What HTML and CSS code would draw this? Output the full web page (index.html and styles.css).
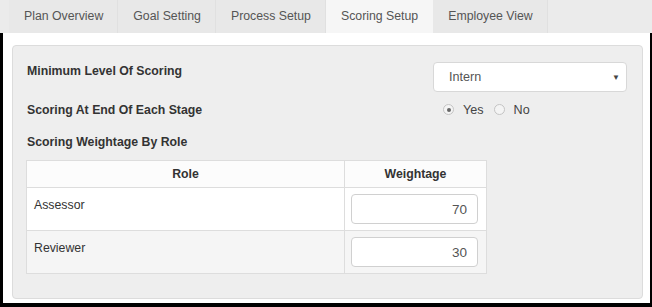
FILE: index.html
```html
<!DOCTYPE html>
<html>

<head>
    <meta charset="utf-8">
    <title>Scoring Setup</title>
    <link rel="stylesheet" href="styles.css">
</head>

<body>
    <!-- tabs -->
    <div class="tabs">
        <span class="tab">Plan Overview</span>
        <span class="tab">Goal Setting</span>
        <span class="tab">Process Setup</span>
        <span class="tab active">Scoring Setup</span>
        <span class="tab">Employee View</span>
    </div>

    <div class="content">
        <div class="panel">
            <div class="form-row">
                <label class="title">Minimum Level Of Scoring</label>
                <div class="select">
                    <span>Intern</span>
                    <span class="caret">&#9660;</span>
                </div>
            </div>

            <div class="form-row stage">
                <label class="title">Scoring At End Of Each Stage</label>
                <div class="radios">
                    <span class="radio checked"></span>
                    <span class="radio-text">Yes</span>
                    <span class="radio"></span>
                    <span class="radio-text">No</span>
                </div>
            </div>

            <label class="title weight-title">Scoring Weightage By Role</label>

            <!-- weightage table -->
            <table class="weight-table">
                <thead>
                    <tr>
                        <th class="col-role">Role</th>
                        <th class="col-weight">Weightage</th>
                    </tr>
                </thead>
                <tbody>
                    <tr>
                        <td class="role">Assessor</td>
                        <td class="weight"><input type="text" value="70"></td>
                    </tr>
                    <tr>
                        <td class="role">Reviewer</td>
                        <td class="weight"><input type="text" value="30"></td>
                    </tr>
                </tbody>
            </table>
        </div>
    </div>
</body>

</html>
```

FILE: styles.css
```css
body {
    margin: 0;
    padding: 0;
    background-color: white;
    font-family: "Liberation Sans", Arial, sans-serif;
    font-size: 12.3px;
    color: #333;
}
/*tabs*/

.tabs {
    display: flex;
    height: 33px;
    padding-left: 9px;
    background-color: #ebebeb;
}

.tabs .tab {
    padding: 0 14px 0 15px;
    line-height: 33px;
    color: #555;
    background-color: #e8e8e8;
    border-right: 1px solid #e0e0e0;
}

.tabs .tab.active {
    background-color: #f6f6f6;
    border-right-color: #f6f6f6;
}
/*content*/

.content {
    border-left: 3px solid #000;
    border-right: 2px solid #000;
    border-bottom: 5px solid #000;
    padding: 12px 7px 4px 9px;
}

.panel {
    background-color: #eeeeee;
    border: 1px solid #dcdcdc;
    border-radius: 4px;
    padding: 16px 15px 24px 14px;
}

.form-row {
    display: grid;
    grid-template-columns: 1fr 194px;
    align-items: start;
}

.title {
    display: block;
    font-weight: bold;
    line-height: 17px;
    color: #333;
}

.form-row .title {
    padding-top: 1px;
}

.select {
    display: flex;
    justify-content: space-between;
    align-items: center;
    height: 28px;
    padding: 0 6px 0 15px;
    background-color: white;
    border: 1px solid #d8d8d8;
    border-radius: 4px;
    color: #555;
    font-size: 12.6px;
}

.select .caret {
    font-size: 8px;
    color: #444;
}

.stage {
    margin-top: 9px;
}

.radios {
    display: flex;
    align-items: center;
    height: 17px;
    padding-left: 10px;
    color: #444;
    font-size: 12.6px;
}

.radio {
    box-sizing: border-box;
    width: 11px;
    height: 11px;
    border: 1px solid #c4c4c4;
    border-radius: 50%;
    background-color: #f4f4f4;
    position: relative;
}

.radio.checked::after {
    content: "";
    position: absolute;
    left: 2.5px;
    top: 2.5px;
    width: 4px;
    height: 4px;
    border-radius: 50%;
    background-color: #666;
}

.radio-text {
    margin: 0 10px 0 9px;
}

.weight-title {
    margin-top: 15px;
}
/*table*/

.weight-table {
    margin-top: 9px;
    width: 461px;
    border-collapse: collapse;
    margin-left: -1px;
}

.weight-table th,
.weight-table td {
    border: 1px solid #dddddd;
}

.weight-table th {
    height: 26px;
    padding: 0;
    background-color: #fcfcfc;
    font-weight: bold;
    text-align: center;
}

.weight-table .col-weight {
    width: 141px;
}

.weight-table tbody tr {
    background-color: white;
}

.weight-table tbody tr:nth-child(even) {
    background-color: #f5f5f5;
}

.weight-table td.role {
    vertical-align: top;
    padding: 9px 7px 0;
    line-height: 17px;
    color: #333;
}

.weight-table td.weight {
    padding: 6px 7px 6px 6px;
}

.weight-table td.weight input {
    display: block;
    box-sizing: border-box;
    width: 127px;
    height: 30px;
    padding: 0 10px;
    border: 1px solid #d0d0d0;
    border-radius: 4px;
    background-color: white;
    text-align: right;
    font-family: "Liberation Sans", Arial, sans-serif;
    font-size: 13.5px;
    color: #555;
}
```
